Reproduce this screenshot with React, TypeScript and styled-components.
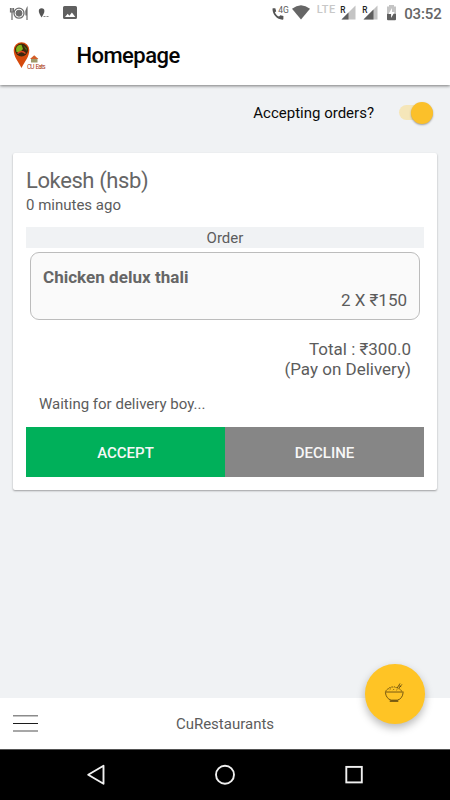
import React from "react";
import styled, { createGlobalStyle } from "styled-components";

const GlobalStyle = createGlobalStyle`
  * { box-sizing: border-box; }
  body { margin: 0; background: #f0f2f4; font-family: Roboto, sans-serif; color: #5c5c5c; }
  button { font-family: inherit; border: 0; padding: 0; cursor: pointer; }
`;

const Screen = styled.div`
  width: 450px;
  height: 800px;
  display: flex;
  flex-direction: column;
  background: #f0f2f4;
  overflow: hidden;
`;

const TopArea = styled.header`
  height: 85px;
  background: #fff;
  box-shadow: 0 1px 3px rgba(0, 0, 0, 0.5);
`;

const StatusBar = styled.div`
  height: 27px;
  svg { display: block; }
`;

const TitleBar = styled.div`
  height: 58px;
  display: flex;
  align-items: center;
  padding-left: 11px;
`;

const Title = styled.h1`
  margin: 0 0 0 25.5px;
  font-size: 22px;
  letter-spacing: -0.55px;
  line-height: 28px;
  font-weight: 500;
  color: #050505;
`;

const Main = styled.main`
  flex: 1;
  padding: 0 13px;
`;

const Availability = styled.div`
  height: 68px;
  padding: 16px 4px 0 0;
  display: flex;
  justify-content: flex-end;
  align-items: flex-start;
  gap: 25px;
  font-size: 15px;
  line-height: 25px;
  color: #0a0a0a;
`;

const Track = styled.button`
  width: 34px;
  height: 15px;
  margin-top: 4px;
  border-radius: 8px;
  background: #f5e6b9;
  display: flex;
  align-items: center;
  justify-content: flex-end;
`;

const Thumb = styled.span`
  flex: none;
  width: 22px;
  height: 22px;
  border-radius: 50%;
  background: #fbc02a;
  box-shadow: 0 1px 2px rgba(0, 0, 0, 0.35);
`;

const Card = styled.section`
  height: 337px;
  padding: 13px;
  background: #fff;
  border-radius: 2px;
  box-shadow: 0 1px 2px rgba(0, 0, 0, 0.35);
`;

const Customer = styled.h2`
  margin: 0;
  font-size: 22px;
  letter-spacing: -0.4px;
  line-height: 30px;
  font-weight: 400;
  color: #666;
`;

const Age = styled.div`
  font-size: 15px;
  line-height: 18px;
`;

const OrderLabel = styled.div`
  height: 21px;
  margin-top: 13px;
  background: #f0f2f4;
  text-align: center;
  font-size: 15px;
  line-height: 22px;
`;

const Item = styled.div`
  height: 68px;
  margin: 4px 4px 0;
  padding: 13px 12px 0;
  border: 1px solid #bcbcbc;
  border-radius: 9px;
  background: #fafafa;
`;

const ItemName = styled.div`
  font-size: 17px;
  letter-spacing: 0.03px;
  line-height: 22px;
  font-weight: 700;
  color: #666;
`;

const ItemPrice = styled.div`
  text-align: right;
  font-size: 17px;
  line-height: 24px;
`;

const Total = styled.div`
  margin-top: 19px;
  padding-right: 13px;
  text-align: right;
  font-size: 17px;
  line-height: 20px;
`;

const Progress = styled.div`
  height: 48px;
  padding: 15px 13px 0;
  font-size: 15px;
  line-height: 20px;
`;

const Actions = styled.div`
  display: grid;
  grid-template-columns: 1fr 1fr;
`;

const Action = styled.button<{ $color: string }>`
  height: 50px;
  padding-top: 2px;
  background: ${(p) => p.$color};
  color: #f7f7f7;
  font-size: 15px;
  font-weight: 500;
`;

const BottomBar = styled.footer`
  position: relative;
  height: 51px;
  display: flex;
  align-items: center;
  justify-content: center;
  padding-top: 1px;
  background: #fff;
  font-size: 15px;
`;

const MenuButton = styled.button`
  position: absolute;
  left: 13px;
  top: 16px;
  width: 26px;
  height: 18px;
  background: transparent;
  svg { display: block; }
`;

const MealButton = styled.button`
  position: absolute;
  left: 365px;
  top: -34px;
  width: 59.5px;
  height: 59.5px;
  border-radius: 50%;
  background: #ffc425;
  box-shadow: 0 4px 8px rgba(0, 0, 0, 0.28);
  display: grid;
  place-items: center;
  padding-bottom: 3px;
`;

const SystemNav = styled.nav`
  height: 51px;
  background: #000;
  border-top: 1px solid #555;
  svg { display: block; }
`;

const StatusIcons = () => (
  <svg width="450" height="27" viewBox="0 0 450 27" fontFamily="Roboto, sans-serif">
    <g fill="none" stroke="#6d6d6d">
      <circle cx="19" cy="13.2" r="5" strokeWidth="1.3" />
      <circle cx="19" cy="13.2" r="3" fill="#6d6d6d" strokeWidth="1" />
      <path d="M10.5 8v4h3V8M12 8v12" strokeWidth="1.2" />
      <path d="M27 20V8q-2 3-1 7h1" strokeWidth="1.2" />
    </g>
    <path d="M41.6 17.5C39.5 14 38.8 12.5 38.8 11a2.8 2.8 0 0 1 5.6 0c0 1.5-.8 3-2.8 6.500z" fill="#555" />
    <path d="M43.500 16.500h6" stroke="#888" strokeDasharray="2 1" />
    <path fillRule="evenodd" d="M64.500 6h11q1.500 0 1.500 1.500v10q0 1.500-1.500 1.500h-11q-1.500 0-1.500-1.500v-10Q63 6 64.500 6zM65 17h10.300l-3.400-4.500-2.500 3.200-1.700-2z" fill="#606060" />
    <path d="M273 8.200h2.300l.9 3-1.300 1.200c1 2 2.200 3.200 4.100 4.200l1.400-1.300 3 .8v2.700c0 .6-.3.900-.9.900-5.500 0-10-5.200-10-10.600 0-.5.100-.9.500-.9z" fill="#555" />
    <text x="278.300" y="13" fontSize="8.500" fill="#5c5c5c">4G</text>
    <path d="M292 8.700q9-7 18 0l-9 10.800z" fill="#666" />
    <text x="316.700" y="13.200" fontSize="11" fontWeight="500" textLength="18.500" fill="#c8c8c8">LTE</text>
    <text x="340.200" y="12.800" fontSize="8.300" fontWeight="500" fill="#222">R</text>
    <path d="M355.500 5.500V19.500h-14z" fill="#c4c4c4" />
    <path d="M348.500 12.500v7h-7z" fill="#5e5e5e" />
    <text x="362.200" y="12.800" fontSize="8.300" fontWeight="500" fill="#222">R</text>
    <path d="M377.500 5.500V19.500h-14z" fill="#c4c4c4" />
    <path d="M373.500 9.500v10h-10z" fill="#5e5e5e" />
    <path d="M387 6.500h2V5h5v1.500h2v7.200h-9z" fill="#c4c4c4" />
    <path d="M387 13.700h9v5.500q0 1-1 1h-7q-1 0-1-1z" fill="#606060" />
    <path d="M392 8l-3.500 6h2.600v4l3.500-6H392z" fill="#fff" />
    <text x="404.200" y="18.700" fontSize="15" fontWeight="500" textLength="37.500" fill="#666">03:52</text>
  </svg>
);

const Logo = () => (
  <svg width="40" height="34" viewBox="11 40 40 34">
    <path d="M21.500 69C18 62 13.700 58 13.700 51a7.800 7.800 0 0 1 15.600 0C29.300 58 25 62 21.500 69z" fill="#d54a0c" />
    <circle cx="21.500" cy="51" r="6.500" fill="#3c260d" />
    <path d="M16 50a5.500 5.500 0 0 1 5.500-4.200l1.500 4.200-3 3.300-3.500-.3z" fill="#83b51c" />
    <path d="M23 46.100l3.500 3.500.2 2.400z" fill="#577e1e" />
    <path d="M17.500 54.500q4-4 8 0" fill="none" stroke="#dc461f" strokeWidth="1.300" />
    <path d="M31 59h6.500v4.500H31z" fill="#9f9a6c" />
    <path d="M30 60l4.200-3.800 4.200 3.800z" fill="#d45e28" />
    <text x="27" y="69.500" fontFamily="Roboto, sans-serif" fontSize="6.500" textLength="18.500" wordSpacing="1" fill="#ac3b22">CU Eats</text>
  </svg>
);

const MenuIcon = () => (
  <svg width="26" height="18" viewBox="0 0 26 18">
    <path d="M0 1.800h25M0 17h25" stroke="#8b8b8b" strokeWidth="1.600" />
    <path d="M0 9.500h25" stroke="#1c1c1c" strokeWidth="1" />
  </svg>
);

const RiceBowl = () => (
  <svg width="21" height="21" viewBox="0 0 22 22" fill="none" stroke="#4c390c" strokeWidth=".8">
    <path d="M1 10.500h19.500M1.500 11q.7 6.500 6 8h6.500q5.500-1.500 6-8" />
    <path d="M6 20h9" strokeWidth="1.300" />
    <path d="M2 10q.3-2.500 2.500-2.600.4-1.800 2.300-1.300 1-1.600 2.800-.6 1.700-1 2.800.5 2-.5 2.700 1 2.300 0 3.300 2.800" strokeDasharray="2 .7" />
    <path d="M6 8l1-.8M9.500 8.500l1-1M13 8.500l1-.8M14 6l2.800-4.500M15.500 6.500l3.300-4M16 4l2 1" />
  </svg>
);

const NavIcons = () => (
  <svg width="450" height="50" viewBox="0 750 450 50" fill="none" stroke="#f0f0f0" strokeWidth="1.900" strokeLinejoin="round">
    <path d="M103.500 765.700v18L88.200 774.700z" />
    <circle cx="225" cy="774.700" r="9" />
    <rect x="346.300" y="766.900" width="15.500" height="15.500" strokeLinejoin="miter" />
  </svg>
);

export default function App() {
  return (
    <>
      <GlobalStyle />
      <Screen>
        <TopArea>
          <StatusBar><StatusIcons /></StatusBar>
          <TitleBar>
            <Logo />
            <Title>Homepage</Title>
          </TitleBar>
        </TopArea>
        <Main>
          <Availability>
            <span>Accepting orders?</span>
            <Track role="switch" aria-checked="true"><Thumb /></Track>
          </Availability>
          <Card>
            <Customer>Lokesh (hsb)</Customer>
            <Age>0 minutes ago</Age>
            <OrderLabel>Order</OrderLabel>
            <Item>
              <ItemName>Chicken delux thali</ItemName>
              <ItemPrice>2 X ₹150</ItemPrice>
            </Item>
            <Total>
              <div>Total : ₹300.0</div>
              <div>(Pay on Delivery)</div>
            </Total>
            <Progress>Waiting for delivery boy...</Progress>
            <Actions>
              <Action $color="#00b05a">ACCEPT</Action>
              <Action $color="#868686">DECLINE</Action>
            </Actions>
          </Card>
        </Main>
        <BottomBar>
          <MenuButton aria-label="Menu"><MenuIcon /></MenuButton>
          <span>CuRestaurants</span>
          <MealButton aria-label="Meals"><RiceBowl /></MealButton>
        </BottomBar>
        <SystemNav><NavIcons /></SystemNav>
      </Screen>
    </>
  );
}
